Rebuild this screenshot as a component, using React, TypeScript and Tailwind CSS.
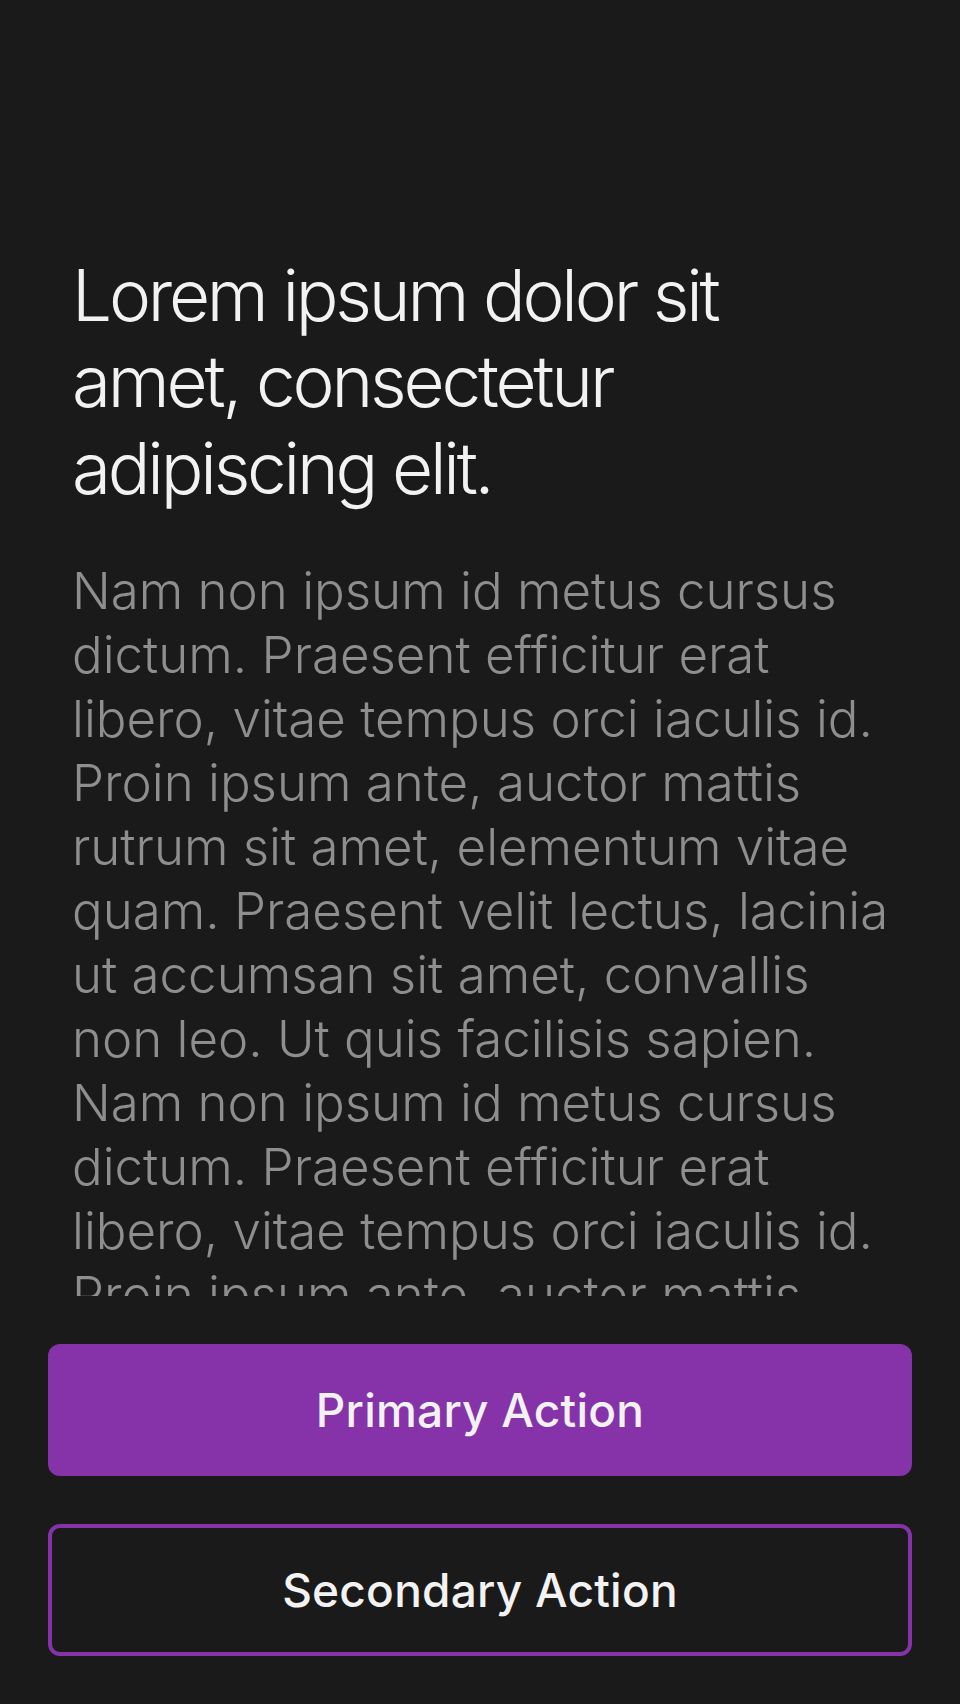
const BODY =
  "Nam non ipsum id metus cursus dictum. Praesent efficitur erat libero, vitae tempus orci iaculis id. Proin ipsum ante, auctor mattis rutrum sit amet, elementum vitae quam. Praesent velit lectus, lacinia ut accumsan sit amet, convallis non leo. Ut quis facilisis sapien. ";

export default function App() {
  return (
    <div
      className="flex h-[1704px] w-full flex-col bg-[#1a1a1a]"
      style={{ fontFamily: "Inter, 'Noto Sans', sans-serif" }}
    >
      {/* scrollable content */}
      <div className="min-h-0 flex-1 overflow-hidden pl-[72px] pr-[56px] pt-[252px]">
        <h1 className="max-w-[816px] text-[71px] font-light leading-[86.4px] tracking-[-0.045em] text-[#f2f2f2]">
          Lorem ipsum dolor sit amet, consectetur adipiscing elit.
        </h1>
        <p className="mt-[48px] text-[51px] font-light leading-[64px] tracking-[0em] text-[#8e8e8e]">
          {BODY}
          {BODY}
          {BODY}
        </p>
      </div>

      {/* actions */}
      <div className="flex flex-col gap-[48px] px-[48px] pt-[48px] pb-[48px]">
        <button className="h-[132px] w-full rounded-[12px] bg-[#8633aa] text-[46px] font-medium tracking-[0.005em] text-[#f2f2f2]">
          Primary Action
        </button>
        <button className="h-[132px] w-full rounded-[12px] border-4 border-[#8633aa] bg-transparent text-[46px] font-medium tracking-[0.005em] text-[#f2f2f2]">
          Secondary Action
        </button>
      </div>
    </div>
  );
}
